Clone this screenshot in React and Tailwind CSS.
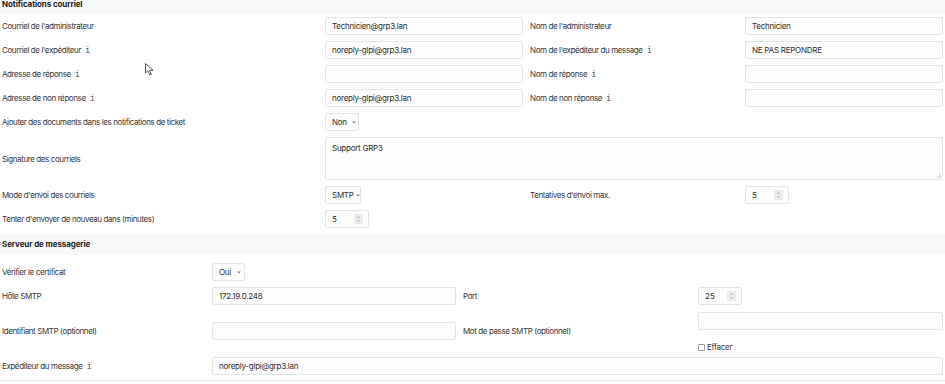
import React from "react";

const font = { fontFamily: "Inter, 'Noto Sans', sans-serif" };

const Info = () => (
  <span className="ml-[4px] text-[9px] leading-none text-[#555] tracking-normal" style={{ fontFamily: "'DejaVu Sans Mono', monospace" }}>
    i
  </span>
);

const Label = ({ children, info, className = "" }) => (
  <div className={`flex items-center text-[8px] tracking-[-0.4px] text-[#363636] ${className}`}>
    {children}
    {info && <Info />}
  </div>
);

const Input = ({ value = "", className = "" }) => (
  <div className={`h-[18px] flex items-center px-[6px] bg-[#fdfdfd] border border-[#e4e4e4] rounded-[2px] text-[8px] tracking-[-0.25px] text-[#2d2d2d] ${className}`}>
    {value}
  </div>
);

const Caret = () => (
  <svg width="4" height="3" viewBox="0 0 4 3" className="shrink-0">
    <path d="M0 0.5 L4 0.5 L2 2.5 Z" fill="#888" />
  </svg>
);

const Select = ({ value, className = "" }) => (
  <div className={`h-[18px] flex items-center px-[6px] bg-[#fdfdfd] border border-[#e4e4e4] rounded-[2px] text-[8px] tracking-[-0.25px] text-[#2d2d2d] ${className}`}>
    <span>{value}</span>
    <Caret />
  </div>
);

const NumberInput = ({ value }) => (
  <div className="h-[18px] w-[44px] flex items-center justify-between pl-[6px] pr-[5px] bg-[#fdfdfd] border border-[#e4e4e4] rounded-[2px] text-[8px] text-[#2d2d2d]">
    <span>{value}</span>
    <span className="w-[9px] h-[10px] bg-[#ececec] flex flex-col items-center justify-center">
      <svg width="5" height="8" viewBox="0 0 5 8" fill="none" stroke="#9a9a9a" strokeWidth="0.8">
        <path d="M1 3 L2.5 1.5 L4 3" />
        <path d="M1 5 L2.5 6.5 L4 5" />
      </svg>
    </span>
  </div>
);

const Header = ({ children, className = "" }) => (
  <div className={`bg-[#f7f8fa] pl-[2px] text-[8px] font-bold tracking-[-0.1px] text-[#1f1f1f] flex ${className}`}>
    {children}
  </div>
);

export default function App() {
  return (
    <div className="relative w-[945px] h-[384px] bg-white overflow-hidden" style={font}>
      <Header className="h-[14px] items-start leading-[8px]">Notifications courriel</Header>

      <div className="grid grid-cols-[325px_198px_222px_198px] grid-rows-[24px_24px_24px_24px_24px_49px_24px_24px] items-center">
        <Label className="pl-[2px]">Courriel de l'administrateur</Label>
        <Input value="Technicien@grp3.lan" />
        <Label className="pl-[7px]">Nom de l'administrateur</Label>
        <Input value="Technicien" />

        <Label className="pl-[2px]" info>Courriel de l'expéditeur</Label>
        <Input value="noreply-glpi@grp3.lan" />
        <Label className="pl-[7px]" info>Nom de l'expéditeur du message</Label>
        <Input value="NE PAS REPONDRE" />

        <Label className="pl-[2px]" info>Adresse de réponse</Label>
        <Input />
        <Label className="pl-[7px]" info>Nom de réponse</Label>
        <Input />

        <Label className="pl-[2px]" info>Adresse de non réponse</Label>
        <Input value="noreply-glpi@grp3.lan" />
        <Label className="pl-[7px]" info>Nom de non réponse</Label>
        <Input />

        <Label className="pl-[2px]">Ajouter des documents dans les notifications de ticket</Label>
        <div className="col-span-3">
          <Select value="Non" className="w-[34px] gap-[5px]" />
        </div>

        <Label className="pl-[2px]">Signature des courriels</Label>
        <div className="col-span-3">
          <div className="relative h-[43px] bg-[#fdfdfd] border border-[#e4e4e4] rounded-[2px] px-[6px] pt-[4px] text-[8px] tracking-[-0.25px] text-[#2d2d2d]">
            Support GRP3
            <svg className="absolute right-[1px] bottom-[1px]" width="5" height="5" viewBox="0 0 5 5" stroke="#aaa" strokeWidth="0.7">
              <path d="M5 1 L1 5 M5 3 L3 5" />
            </svg>
          </div>
        </div>

        <Label className="pl-[2px]">Mode d'envoi des courriels</Label>
        <div>
          <Select value="SMTP" className="w-[36px] gap-[2px]" />
        </div>
        <Label className="pl-[7px]">Tentatives d'envoi max.</Label>
        <div>
          <NumberInput value="5" />
        </div>

        <Label className="pl-[2px]">Tenter d'envoyer de nouveau dans (minutes)</Label>
        <div className="col-span-3">
          <NumberInput value="5" />
        </div>
      </div>

      <Header className="h-[22px] mt-[2px] items-center">Serveur de messagerie</Header>

      <div className="grid grid-cols-[212px_244px_242px_245px] grid-rows-[24px_24px_46px_24px] items-center pt-[5px] border-b border-[#e8e8e8] pb-[2px]">
        <Label className="pl-[2px]">Vérifier le certificat</Label>
        <div className="col-span-3">
          <Select value="Oui" className="w-[33px] gap-[6px]" />
        </div>

        <Label className="pl-[2px]">Hôte SMTP</Label>
        <Input value="172.19.0.248" />
        <Label className="pl-[7px]">Port</Label>
        <div>
          <NumberInput value="25" />
        </div>

        <Label className="pl-[2px]">Identifiant SMTP (optionnel)</Label>
        <Input />
        <Label className="pl-[7px]">Mot de passe SMTP (optionnel)</Label>
        <div className="flex flex-col h-[46px] pt-[4px]">
          <Input />
          <div className="flex items-center gap-[2px] mt-[11px] text-[8px] tracking-[-0.25px] text-[#363636]">
            <span className="w-[7px] h-[7px] border border-[#9a9a9a] rounded-[1px] bg-white" />
            Effacer
          </div>
        </div>

        <Label className="pl-[2px]" info>Expéditeur du message</Label>
        <div className="col-span-3">
          <Input value="noreply-glpi@grp3.lan" />
        </div>
      </div>

      <svg className="absolute left-[145px] top-[63px]" width="9" height="13" viewBox="0 0 9 13">
        <path d="M0.5 0.5 L0.5 10 L3 7.8 L4.8 12 L6.3 11.3 L4.6 7.3 L8 7.3 Z" fill="white" stroke="#333" strokeWidth="0.8" strokeLinejoin="round" />
      </svg>
    </div>
  );
}
